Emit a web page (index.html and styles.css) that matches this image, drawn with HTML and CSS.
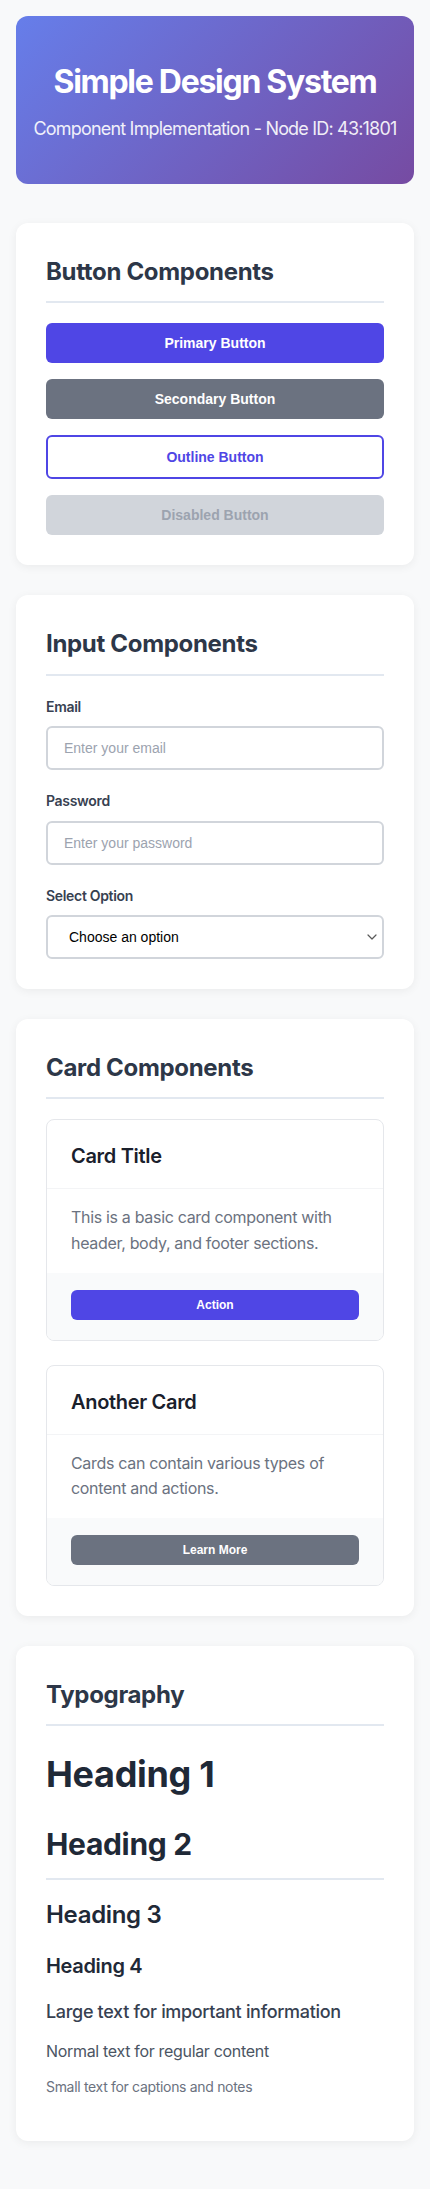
FILE: index.html
```html
<!DOCTYPE html>
<html lang="en">
<head>
<meta charset="utf-8">
<meta name="viewport" content="width=device-width, initial-scale=1">
<title>Simple Design System</title>
<link rel="stylesheet" href="styles.css">
</head>
<body>
<div class="container">
  <header class="hero">
    <h1 class="hero-title">Simple Design System</h1>
    <p class="hero-sub">Component Implementation - Node ID: 43:1801</p>
  </header>

  <section class="panel">
    <h2 class="panel-title">Button Components</h2>
    <div class="btn-stack">
      <button class="btn btn-primary">Primary Button</button>
      <button class="btn btn-secondary">Secondary Button</button>
      <button class="btn btn-outline">Outline Button</button>
      <button class="btn btn-disabled" disabled>Disabled Button</button>
    </div>
  </section>

  <section class="panel">
    <h2 class="panel-title">Input Components</h2>
    <div class="field">
      <label class="field-label" for="email">Email</label>
      <input class="field-input" id="email" type="email" placeholder="Enter your email">
    </div>
    <div class="field">
      <label class="field-label" for="pw">Password</label>
      <input class="field-input" id="pw" type="password" placeholder="Enter your password">
    </div>
    <div class="field">
      <label class="field-label" for="opt">Select Option</label>
      <div class="select-wrap">
        <select class="field-input field-select" id="opt">
          <option>Choose an option</option>
          <option>Option 1</option>
          <option>Option 2</option>
        </select>
        <svg class="select-chevron" width="10" height="6" viewBox="0 0 10 6" aria-hidden="true">
          <path d="M1 1 L5 5 L9 1" fill="none" stroke="#595959" stroke-width="1.2" stroke-linecap="round" stroke-linejoin="round"/>
        </svg>
      </div>
    </div>
  </section>

  <section class="panel">
    <h2 class="panel-title">Card Components</h2>
    <div class="card">
      <div class="card-header"><h3 class="card-title">Card Title</h3></div>
      <div class="card-body"><p class="card-text">This is a basic card component with header, body, and footer sections.</p></div>
      <div class="card-footer"><button class="btn-sm btn-primary">Action</button></div>
    </div>
    <div class="card">
      <div class="card-header"><h3 class="card-title">Another Card</h3></div>
      <div class="card-body"><p class="card-text">Cards can contain various types of content and actions.</p></div>
      <div class="card-footer"><button class="btn-sm btn-secondary">Learn More</button></div>
    </div>
  </section>

  <section class="panel">
    <h2 class="panel-title">Typography</h2>
    <h1 class="t-h1">Heading 1</h1>
    <h2 class="t-h2">Heading 2</h2>
    <h3 class="t-h3">Heading 3</h3>
    <h4 class="t-h4">Heading 4</h4>
    <p class="t-large">Large text for important information</p>
    <p class="t-normal">Normal text for regular content</p>
    <p class="t-small">Small text for captions and notes</p>
  </section>
</div>
</body>
</html>
```
FILE: styles.css
```css
* {
  box-sizing: border-box;
}

body {
  margin: 0;
  background: #f8f9fa;
  font-family: Inter, "Noto Sans", sans-serif;
  line-height: 1.6;
  letter-spacing: -0.02em;
  color: #2d3748;
}

.container {
  padding: 16px;
}

.hero {
  background: linear-gradient(135deg, #667eea 0%, #764ba2 100%);
  border-radius: 12px;
  padding: 40px 6px;
  text-align: center;
  color: #ffffff;
  margin-bottom: 39px;
}

.hero-title {
  margin: 0 0 8px;
  font-size: 32px;
  font-weight: 700;
  letter-spacing: -0.04em;
}

.hero-sub {
  margin: 0;
  font-size: 18px;
  letter-spacing: -0.045em;
  opacity: 0.9;
}

.panel {
  background: #ffffff;
  border-radius: 12px;
  padding: 30px;
  margin-bottom: 30px;
  box-shadow: 0 2px 10px rgba(0, 0, 0, 0.06);
}

.panel-title {
  margin: 0 0 20px;
  padding-bottom: 10px;
  border-bottom: 2px solid #e2e8f0;
  font-size: 24px;
  font-weight: 700;
  color: #2d3748;
}

/* Buttons */
.btn-stack {
  display: flex;
  flex-direction: column;
  gap: 16px;
}

.btn {
  display: block;
  width: 100%;
  padding: 12px 16px;
  border: none;
  border-radius: 6px;
  font-family: "Liberation Sans", Arial, sans-serif;
  font-size: 14px;
  font-weight: 700;
  line-height: normal;
  letter-spacing: 0;
  cursor: pointer;
}

.btn-primary {
  background: #4f46e5;
  color: #ffffff;
}

.btn-secondary {
  background: #6b7280;
  color: #ffffff;
}

.btn-outline {
  background: #ffffff;
  color: #4f46e5;
  border: 2px solid #4f46e5;
}

.btn-disabled {
  background: #d1d5db;
  color: #9ca3af;
  cursor: not-allowed;
}

/* Inputs */
.field {
  margin-bottom: 20px;
}

.field:last-child {
  margin-bottom: 0;
}

.field-label {
  display: block;
  margin-bottom: 8px;
  font-size: 14px;
  font-weight: 600;
  color: #374151;
}

.field-input {
  display: block;
  width: 100%;
  padding: 12px 16px;
  border: 2px solid #d1d5db;
  border-radius: 6px;
  background: #ffffff;
  font-family: "Liberation Sans", Arial, sans-serif;
  font-size: 14px;
  line-height: normal;
  letter-spacing: 0;
  color: #111111;
}

.field-input::placeholder {
  color: #9ca3af;
}

.select-wrap {
  position: relative;
}

.field-select {
  appearance: none;
  -webkit-appearance: none;
  padding-left: 21px;
  padding-right: 36px;
  color: #000000;
}

.select-chevron {
  position: absolute;
  right: 7px;
  top: 50%;
  margin-top: -3px;
  pointer-events: none;
}

/* Cards */
.card {
  border: 1px solid #e5e7eb;
  border-radius: 8px;
  overflow: hidden;
  margin-bottom: 24px;
}

.card:last-child {
  margin-bottom: 0;
}

.card-header {
  padding: 24px 24px 20px;
  border-bottom: 1px solid #f3f4f6;
}

.card-title {
  margin: 0;
  font-size: 20px;
  font-weight: 600;
  line-height: 1.2;
  color: #1a202c;
}

.card-body {
  padding: 16px 24px;
}

.card-text {
  margin: 0;
  font-size: 16px;
  color: #6b7280;
}

.card-footer {
  padding: 17px 24px 20px;
  background: #f9fafb;
}

.btn-sm {
  display: block;
  width: 100%;
  padding: 8px 16px;
  border: none;
  border-radius: 6px;
  font-family: "Liberation Sans", Arial, sans-serif;
  font-size: 12px;
  font-weight: 700;
  line-height: normal;
  letter-spacing: 0;
  cursor: pointer;
}

/* Typography */
.t-h1 {
  margin: 0 0 16px;
  font-size: 36px;
  font-weight: 700;
  color: #1f2937;
}

.t-h2 {
  margin: 0 0 16px;
  padding-bottom: 10px;
  border-bottom: 2px solid #e2e8f0;
  font-size: 30px;
  font-weight: 700;
  color: #1f2937;
}

.t-h3 {
  margin: 0 0 16px;
  font-size: 24px;
  font-weight: 600;
  color: #1f2937;
}

.t-h4 {
  margin: 0 0 16px;
  font-size: 20px;
  font-weight: 600;
  color: #1f2937;
}

.t-large {
  margin: 0 0 12px;
  font-size: 18px;
  font-weight: 500;
  color: #374151;
}

.t-normal {
  margin: 0 0 12px;
  font-size: 16px;
  color: #4b5563;
}

.t-small {
  margin: 0 0 12px;
  font-size: 14px;
  color: #6b7280;
}
```
